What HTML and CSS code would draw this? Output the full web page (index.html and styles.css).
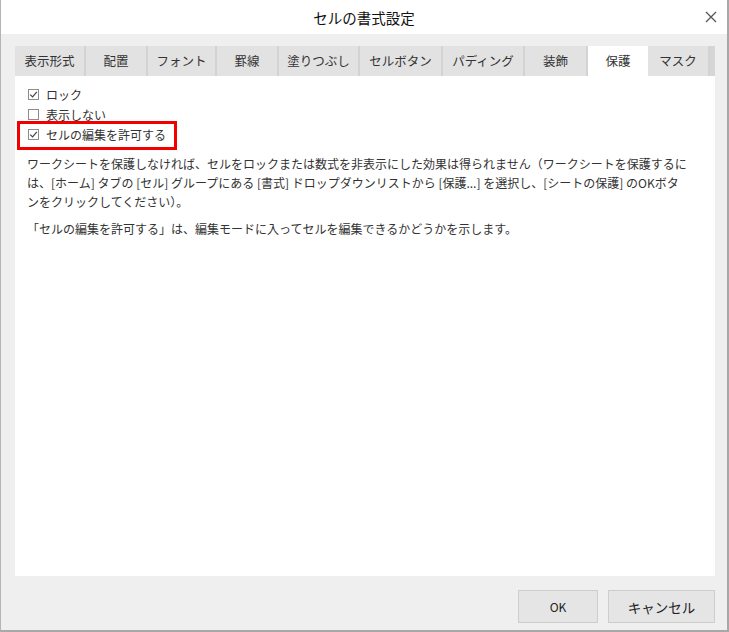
FILE: index.html
```html
<!DOCTYPE html>
<html lang="ja">

<head>
    <meta charset="UTF-8">
    <title>セルの書式設定</title>
    <link rel="stylesheet" href="styles.css">
</head>

<body>
    <div class="dialog">
        <div class="titlebar">
            <div></div>
            <div class="title">セルの書式設定</div>
            <div class="close">
                <svg width="12" height="12" viewBox="0 0 12 12">
                    <path d="M1 1 L11 11 M11 1 L1 11" stroke="#555" stroke-width="1.3" fill="none" />
                </svg>
            </div>
        </div>

        <div class="dialog-body">
            <div class="tabs">
                <div class="tab" style="width: 71px">表示形式</div>
                <div class="tab" style="width: 62px">配置</div>
                <div class="tab" style="width: 69px">フォント</div>
                <div class="tab" style="width: 62px">罫線</div>
                <div class="tab" style="width: 81px">塗りつぶし</div>
                <div class="tab" style="width: 83px">セルボタン</div>
                <div class="tab" style="width: 82px">パディング</div>
                <div class="tab" style="width: 63px">装飾</div>
                <div class="tab active" style="width: 60px">保護</div>
                <div class="tab" style="width: 62px">マスク</div>
            </div>

            <div class="panel">
                <div class="option">
                    <span class="checkbox checked">
                        <svg width="9" height="9" viewBox="0 0 9 9">
                            <path d="M1.2 4.6 L3.6 6.9 L7.8 1.8" stroke="#444" stroke-width="1.2" fill="none" />
                        </svg>
                    </span>
                    <span>ロック</span>
                </div>
                <div class="option">
                    <span class="checkbox"></span>
                    <span>表示しない</span>
                </div>
                <div class="option">
                    <span class="highlight">
                        <span class="checkbox checked">
                            <svg width="9" height="9" viewBox="0 0 9 9">
                                <path d="M1.2 4.6 L3.6 6.9 L7.8 1.8" stroke="#444" stroke-width="1.2" fill="none" />
                            </svg>
                        </span>
                        <span>セルの編集を許可する</span>
                    </span>
                </div>

                <p class="note">ワークシートを保護しなければ、セルをロックまたは数式を非表示にした効果は得られません（ワークシートを保護するに<br>は、[ホーム] タブの [セル] グループにある [書式] ドロップダウンリストから [保護...] を選択し、[シートの保護] のOKボタ<br>ンをクリックしてください）。</p>
                <p class="note">「セルの編集を許可する」は、編集モードに入ってセルを編集できるかどうかを示します。</p>
            </div>
        </div>

        <div class="footer">
            <button class="btn btn-ok">OK</button>
            <button class="btn btn-cancel">キャンセル</button>
        </div>
    </div>
</body>

</html>
```

FILE: styles.css
```css
body {
    margin: 0;
    padding: 0;
    font-family: "Noto Sans CJK JP", "Noto Sans", sans-serif;
    background: #fff;
    color: #333;
}

.dialog {
    width: 729px;
    height: 632px;
    box-sizing: border-box;
    border-left: 1px solid #b4b4b4;
    border-right: 2px solid #a8a8a8;
    border-bottom: 2px solid #a8a8a8;
    background: #efefef;
    display: flex;
    flex-direction: column;
}

.titlebar {
    height: 34px;
    background: #fff;
    display: grid;
    grid-template-columns: 1fr auto 1fr;
    align-items: center;
}

.title {
    font-size: 14.5px;
    color: #111;
    padding-top: 1px;
}

.close {
    justify-self: end;
    width: 12px;
    height: 12px;
    margin-right: 10px;
    display: flex;
}

.dialog-body {
    flex: 1;
    display: flex;
    flex-direction: column;
    padding: 12px 12px 0 14px;
}

.tabs {
    display: flex;
    height: 30px;
    background: #d6d6d6;
}

.tab {
    box-sizing: border-box;
    height: 30px;
    line-height: 30px;
    text-align: center;
    font-size: 12.5px;
    color: #333;
    background: #e2e2e2;
    border-right: 2px solid #d3d3d3;
}

.tab.active {
    background: #fff;
    border-right: none;
}

.panel {
    flex: 1;
    background: #fff;
    padding: 8px 12px 0 12px;
}

.option {
    height: 20px;
    display: flex;
    align-items: center;
    font-size: 12px;
    color: #333;
}

.checkbox {
    width: 11px;
    height: 11px;
    box-sizing: border-box;
    border: 1px solid #8c8c8c;
    background: #fff;
    margin-left: 1px;
    margin-right: 7px;
    display: inline-flex;
    align-items: center;
    justify-content: center;
}

.highlight {
    display: inline-flex;
    align-items: center;
    position: relative;
}

/* annotation frame drawn over the option */
.highlight::after {
    content: "";
    position: absolute;
    left: -10px;
    right: -11px;
    top: -5px;
    bottom: -7px;
    border: 3px solid #f20000;
}

.note {
    margin: 10px 0 0 0;
    font-size: 12px;
    line-height: 19px;
    color: #333;
}

.note + .note {
    margin-top: 8px;
}

.footer {
    height: 54px;
    display: flex;
    justify-content: flex-end;
    align-items: flex-start;
    gap: 10px;
    padding: 14px 12px 0 0;
    box-sizing: border-box;
}

.btn {
    height: 33px;
    border: 1px solid #cdcdcd;
    background: #e5e5e5;
    font-family: "Noto Sans CJK JP", "Noto Sans", sans-serif;
    color: #222;
    padding: 0;
}

.btn-ok {
    width: 80px;
    font-size: 12px;
}

.btn-cancel {
    width: 107px;
    font-size: 13.5px;
}
```
